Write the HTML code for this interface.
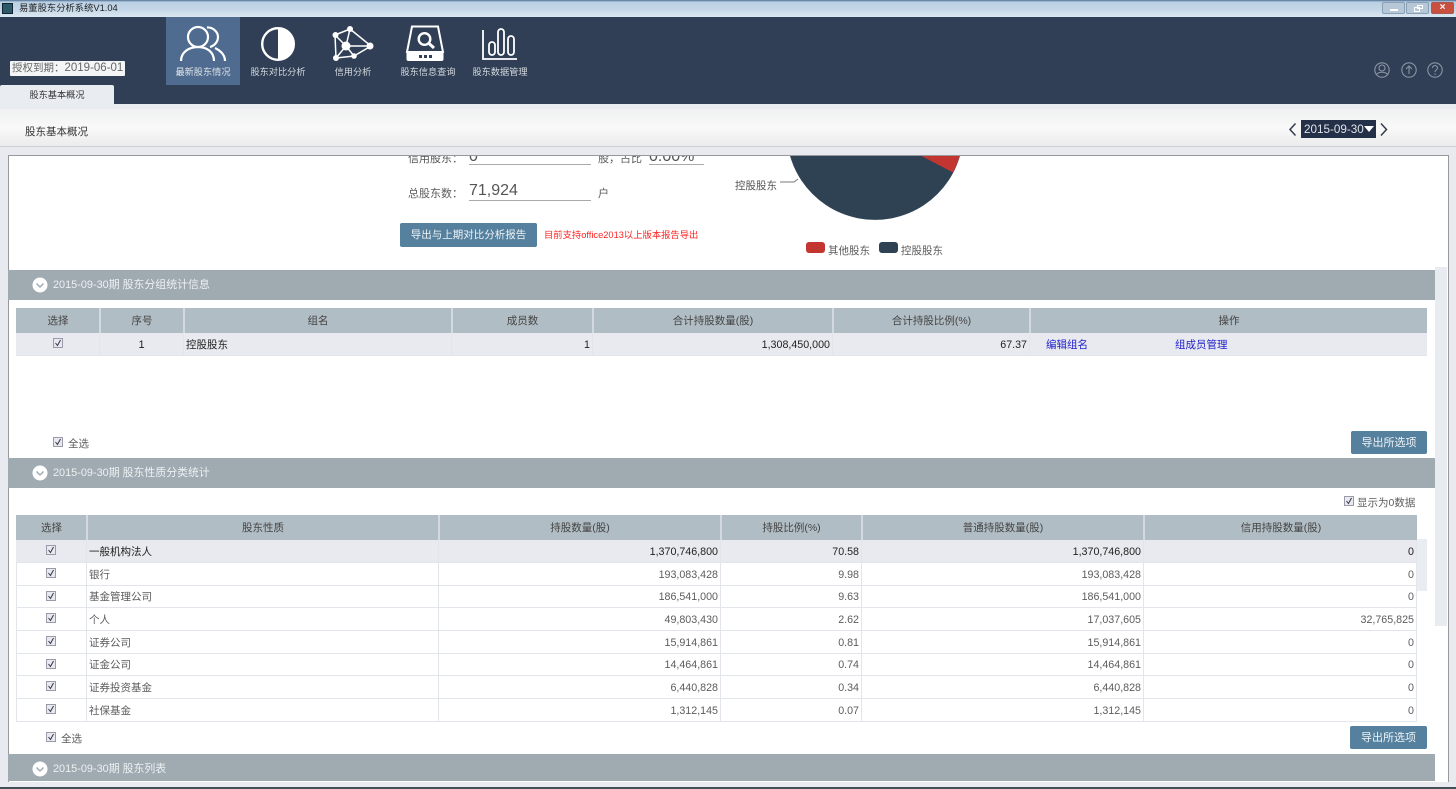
<!DOCTYPE html>
<html lang="zh"><head><meta charset="utf-8"><title>易董股东分析系统V1.04</title>
<style>
*{box-sizing:border-box}
html,body{margin:0;padding:0}
body{width:1456px;height:789px;overflow:hidden;position:relative;background:#e8eaf0;font-family:"Liberation Sans","Noto Sans CJK SC",sans-serif;font-size:10.5px;color:#5c5c5c}
.a{position:absolute;white-space:nowrap}
.c{text-align:center}
.r{text-align:right}
.cell{position:absolute;line-height:24px;white-space:nowrap;overflow:hidden;border-right:1px solid #e2e5ea;border-bottom:1px solid #e2e5ea;padding:0 2px}
.r.cell{font-size:10.7px!important}
.th{background:#b1bdc4;color:#444;text-align:center;border-left:1px solid #d3d9de;border-right:1px solid #d3d9de;border-bottom:none;line-height:26px}
.hl{background:#e9eaef;color:#222}
.sec{position:absolute;left:8px;width:1427px;height:30px;background:#9faab1;color:#eef1f3;line-height:31px;padding-left:45px;font-size:10.9px}
.sec svg{position:absolute;left:24px;top:7px}
.btn{position:absolute;background:#55809e;color:#eef3f6;text-align:center;border-radius:2px;font-size:11px}
.cb{position:absolute;width:10px;height:10px;background:#e8e9f0;border:1px solid #9a9aa8}
.cb svg{position:absolute;left:0;top:0}
.nav{position:absolute;top:66px;width:76px;text-align:center;color:#d5dae0;font-size:9.2px;line-height:12px}
</style></head><body>
<!-- title bar -->
<div class="a" style="left:0;top:0;width:1456px;height:17px;background:linear-gradient(#4f6f92 0,#b9cfe3 12%,#c6d8e8 60%,#dce8f2 100%)"></div>
<div class="a" style="left:2px;top:3px;width:11px;height:11px;background:#2c5a68;border:1px solid #123"></div>
<div class="a" style="left:19px;top:1px;font-size:9.3px;line-height:14px;color:#222">易董股东分析系统V1.04</div>
<div class="a" style="left:1382px;top:2px;width:23px;height:12px;background:#b6c8d8;border:1px solid #8aa0b4;border-radius:2px"><div style="position:absolute;left:7px;top:6px;width:8px;height:2px;background:#fff"></div></div>
<div class="a" style="left:1406px;top:2px;width:23px;height:12px;background:#b6c8d8;border:1px solid #8aa0b4;border-radius:2px"><div style="position:absolute;left:7px;top:4px;width:6px;height:5px;border:1px solid #fff"></div><div style="position:absolute;left:10px;top:2px;width:6px;height:4px;border:1px solid #fff"></div></div>
<div class="a" style="left:1431px;top:2px;width:23px;height:12px;background:#c9503f;border:1px solid #a65a50;border-radius:2px;color:#fff;font-size:10px;line-height:10px;text-align:center;font-weight:bold">×</div>
<!-- header -->
<div class="a" style="left:0;top:17px;width:1456px;height:87px;background:#303f55"></div>
<div class="a" style="left:166px;top:17px;width:74px;height:68px;background:#4f6b8f"></div>
<div class="a" style="left:10px;top:61px;width:115px;height:15px;background:#f4f5f6;border-radius:1px;color:#666;font-size:11.5px;line-height:15px;padding-left:2px"><span style="font-size:10.5px">授权到期：</span>2019-06-01</div>
<svg class="a" style="left:175px;top:22px" width="56" height="42" viewBox="0 0 56 42" fill="none" stroke="#fff" stroke-width="2.2"><circle cx="23" cy="15" r="10"/><path d="M6 39C6 30 14 25 23 25C32 25 39 30 39 39"/><path d="M32 5.500C38 5 43 10 43 15C43 20 39 24 35 25M40 26C46 29 50 33 50 39"/></svg>
<svg class="a" style="left:260px;top:26px" width="36" height="36" viewBox="0 0 36 36"><circle cx="18" cy="18" r="15.800" fill="#303f55" stroke="#fff" stroke-width="2.400"/><path d="M18 2a16 16 0 0 1 0 32z" fill="#fff"/></svg>
<svg class="a" style="left:332px;top:25px" width="42" height="38" viewBox="0 0 42 38" fill="none" stroke="#fff" stroke-width="1.500"><path d="M3 10 18 4 39 21 22 31 4 33ZM3 10 14 21 22 31M18 4 14 21 39 21M14 21 4 33"/><g fill="#fff" stroke="none"><circle cx="3.500" cy="10" r="3"/><circle cx="18" cy="4" r="3"/><circle cx="14" cy="21" r="4.500"/><circle cx="38" cy="21" r="3.500"/><circle cx="22" cy="31" r="2.800"/><circle cx="4" cy="33" r="3"/></g></svg>
<svg class="a" style="left:405px;top:25px" width="40" height="38" viewBox="0 0 40 38" fill="none" stroke="#fff" stroke-width="2"><path d="M7 1.500H33L38 27H2Z"/><rect x="1.500" y="27" width="37" height="9" rx="2" fill="#fff" stroke="none"/><circle cx="19.500" cy="14" r="5.800" stroke-width="2.400"/><path d="M24 18.500 29 23" stroke-width="3"/><g fill="#303f55" stroke="none"><rect x="14" y="30" width="3" height="3"/><rect x="19" y="30" width="3" height="3"/><rect x="24" y="30" width="3" height="3"/></g></svg>
<svg class="a" style="left:481px;top:25px" width="38" height="38" viewBox="0 0 38 38" fill="none" stroke="#fff" stroke-width="1.800"><path d="M2 5V34H36"/><rect x="8" y="17" width="6" height="13" rx="3"/><rect x="17" y="4" width="6" height="26" rx="3"/><rect x="27" y="11" width="6" height="19" rx="3"/></svg>
<div class="nav" style="left:165px;color:#e0e5ea">最新股东情况</div>
<div class="nav" style="left:240px">股东对比分析</div>
<div class="nav" style="left:315px">信用分析</div>
<div class="nav" style="left:390px">股东信息查询</div>
<div class="nav" style="left:462px">股东数据管理</div>
<svg class="a" style="left:1372px;top:60px" width="74" height="20" viewBox="0 0 74 20" fill="none" stroke="#8a96a4" stroke-width="1.100"><circle cx="10" cy="10" r="7.200"/><circle cx="10" cy="8" r="3"/><path d="M4.500 14.500c2-3 9-3 11 0"/><circle cx="37" cy="10" r="7.200"/><path d="M37 14V6.500M34 9l3-3 3 3"/><circle cx="63" cy="10" r="7.200"/><path d="M60.500 8c0-3.300 5-3.300 5 0 0 2-2.500 2-2.500 4"/><path d="M63 13.500v1.500"/></svg>
<!-- tab -->
<div class="a" style="left:0;top:85px;width:114px;height:19px;background:#e9edf2;border-radius:2px 2px 0 0;text-align:center;line-height:20px;color:#333;font-size:9.2px">股东基本概况</div>
<!-- toolbar -->
<div class="a" style="left:0;top:104px;width:1456px;height:5px;background:#e8ebf0"></div>
<div class="a" style="left:0;top:109px;width:1456px;height:38px;background:linear-gradient(#eff0f1,#f9f9f9 50%,#ececec);border-bottom:1px solid #d0d0d0"></div>
<div class="a" style="left:25px;top:125px;color:#333;font-size:10.5px;line-height:14px">股东基本概况</div>
<svg class="a" style="left:1288px;top:122px" width="10" height="15" viewBox="0 0 10 15" fill="none" stroke="#333c4c" stroke-width="1.500"><path d="M7.500 1.500 2 7.500 7.500 13.500"/></svg>
<div class="a" style="left:1301px;top:120px;width:75px;height:18px;background:#233048;color:#dfe3e8;font-size:11.7px;line-height:19px;padding-left:3px">2015-09-30</div>
<div class="a" style="left:1364px;top:126px;width:0;height:0;border:5.500px solid transparent;border-top:6px solid #fff;border-bottom:0"></div>
<svg class="a" style="left:1379px;top:122px" width="10" height="15" viewBox="0 0 10 15" fill="none" stroke="#333c4c" stroke-width="1.500"><path d="M2 1.500 7.500 7.500 2 13.500"/></svg>
<!-- content panel -->
<div class="a" style="left:8px;top:155px;width:1441px;height:627px;background:#fff;border:1px solid #999;border-bottom:none"></div>
<div class="a" style="left:1435px;top:267px;width:12px;height:359px;background:#e8ebf0"></div>
<div class="a" style="left:0;top:787px;width:1456px;height:2px;background:#444d58"></div>
<div class="a" style="left:408px;top:156px;height:8px;overflow:hidden;color:#555;font-size:11px;line-height:6px;width:60px">信用股东：</div>
<div class="a" style="left:469px;top:156px;height:9px;overflow:hidden;width:122px;border-bottom:1px solid #aaa;font-size:16px;line-height:2px;color:#555">0</div>
<div class="a" style="left:598px;top:156px;height:8px;overflow:hidden;font-size:11px;line-height:6px;width:50px">股，占比</div>
<div class="a" style="left:649px;top:156px;height:9px;overflow:hidden;width:55px;border-bottom:1px solid #aaa;font-size:16px;line-height:2px;color:#555">0.00%</div>
<div class="a" style="left:408px;top:187px;font-size:11px;line-height:14px">总股东数：</div>
<div class="a" style="left:469px;top:181px;width:122px;height:20px;border-bottom:1px solid #aaa;font-size:16px;line-height:19px;color:#555">71,924</div>
<div class="a" style="left:598px;top:187px;font-size:11px;line-height:14px">户</div>
<div class="btn" style="left:400px;top:223px;width:137px;height:24px;line-height:25px;font-size:10.5px">导出与上期对比分析报告</div>
<div class="a" style="left:544px;top:228px;color:#f22;font-size:9.3px;line-height:14px">目前支持office2013以上版本报告导出</div>
<svg class="a" style="left:780px;top:156px" width="190" height="66" viewBox="780 156 190 66"><circle cx="875" cy="131.500" r="88.400" fill="#2f4254"/><path d="M875 131.500 953 172.500A88.400 88.400 0 0 0 960 110L875 110Z" fill="#c23531"/><path d="M780 182h14l4-3" fill="none" stroke="#777" stroke-width="1"/></svg>
<div class="a" style="left:735px;top:179px;font-size:10.5px;line-height:14px;color:#555">控股股东</div>
<div class="a" style="left:806px;top:242px;width:19px;height:11px;background:#c23531;border-radius:3px"></div>
<div class="a" style="left:828px;top:244px;font-size:10.5px;line-height:14px">其他股东</div>
<div class="a" style="left:879px;top:242px;width:19px;height:11px;background:#2f4254;border-radius:3px"></div>
<div class="a" style="left:901px;top:244px;font-size:10.5px;line-height:14px">控股股东</div>
<!-- section 1 -->
<div class="sec" style="top:270px"><svg width="16" height="16" viewBox="0 0 16 16"><circle cx="8" cy="8" r="7.500" fill="#fff"/><path d="M4.500 6.500 8 10 11.500 6.500" fill="none" stroke="#9faab1" stroke-width="1.500"/></svg>2015-09-30期 股东分组统计信息</div>
<div class="cell th" style="left:16px;top:308px;width:84px;height:25px;border-left-color:#b1bdc4">选择</div><div class="cell th" style="left:100px;top:308px;width:84px;height:25px">序号</div><div class="cell th" style="left:184px;top:308px;width:268px;height:25px">组名</div><div class="cell th" style="left:452px;top:308px;width:141px;height:25px">成员数</div><div class="cell th" style="left:593px;top:308px;width:240px;height:25px">合计持股数量(股)</div><div class="cell th" style="left:833px;top:308px;width:197px;height:25px">合计持股比例(%)</div><div class="cell th" style="left:1030px;top:308px;width:397px;height:25px;border-right:none">操作</div>
<div class="cell hl" style="left:16px;top:333px;width:84px;height:23px"></div><div class="cell hl c" style="left:100px;top:333px;width:84px;height:23px;font-size:11px">1</div><div class="cell hl" style="left:184px;top:333px;width:268px;height:23px">控股股东</div><div class="cell hl r" style="left:452px;top:333px;width:141px;height:23px;font-size:11px">1</div><div class="cell hl r" style="left:593px;top:333px;width:240px;height:23px;font-size:11px">1,308,450,000</div><div class="cell hl r" style="left:833px;top:333px;width:197px;height:23px;font-size:11px">67.37</div><div class="cell hl" style="left:1030px;top:333px;width:397px;height:23px;border-right:none"></div>
<div class="a" style="left:1046px;top:338px;color:#2222cc;line-height:14px">编辑组名</div>
<div class="a" style="left:1175px;top:338px;color:#2222cc;line-height:14px">组成员管理</div>
<div class="cb" style="left:53px;top:338px"><svg width="8" height="8" viewBox="0 0 8 8"><path d="M1.500 4 3.500 6.500 6.500 1" fill="none" stroke="#334" stroke-width="1"/></svg></div>
<div class="cb" style="left:53px;top:437px"><svg width="8" height="8" viewBox="0 0 8 8"><path d="M1.500 4 3.500 6.500 6.500 1" fill="none" stroke="#334" stroke-width="1"/></svg></div>
<div class="a" style="left:68px;top:437px;line-height:14px">全选</div>
<div class="btn" style="left:1351px;top:431px;width:76px;height:23px;line-height:24px">导出所选项</div>
<!-- section 2 -->
<div class="sec" style="top:458px"><svg width="16" height="16" viewBox="0 0 16 16"><circle cx="8" cy="8" r="7.500" fill="#fff"/><path d="M4.500 6.500 8 10 11.500 6.500" fill="none" stroke="#9faab1" stroke-width="1.500"/></svg>2015-09-30期 股东性质分类统计</div>
<div class="cb" style="left:1344px;top:496px"><svg width="8" height="8" viewBox="0 0 8 8"><path d="M1.500 4 3.500 6.500 6.500 1" fill="none" stroke="#334" stroke-width="1"/></svg></div>
<div class="a" style="left:1357px;top:496px;line-height:14px">显示为0数据</div>
<div class="cell th" style="left:16px;top:515px;width:71px;height:25px;border-left-color:#b1bdc4">选择</div><div class="cell th" style="left:87px;top:515px;width:352px;height:25px">股东性质</div><div class="cell th" style="left:439px;top:515px;width:282px;height:25px">持股数量(股)</div><div class="cell th" style="left:721px;top:515px;width:141px;height:25px">持股比例(%)</div><div class="cell th" style="left:862px;top:515px;width:282px;height:25px">普通持股数量(股)</div><div class="cell th" style="left:1144px;top:515px;width:273px;height:25px;border-right:none">信用持股数量(股)</div>
<div class="a" style="left:1417px;top:539px;width:10px;height:52px;background:#e9ecf1"></div>
<!-- rows -->
<div class="cell hl" style="left:16px;top:540px;width:71px;height:23px"></div><div class="cell hl" style="left:87px;top:540px;width:352px;height:23px">一般机构法人</div><div class="cell hl r" style="left:439px;top:540px;width:282px;height:23px">1,370,746,800</div><div class="cell hl r" style="left:721px;top:540px;width:141px;height:23px">70.58</div><div class="cell hl r" style="left:862px;top:540px;width:282px;height:23px">1,370,746,800</div><div class="cell hl r" style="left:1144px;top:540px;width:273px;height:23px">0</div>
<div class="cell" style="left:16px;top:563px;width:71px;height:23px"></div><div class="cell" style="left:87px;top:563px;width:352px;height:23px">银行</div><div class="cell r" style="left:439px;top:563px;width:282px;height:23px">193,083,428</div><div class="cell r" style="left:721px;top:563px;width:141px;height:23px">9.98</div><div class="cell r" style="left:862px;top:563px;width:282px;height:23px">193,083,428</div><div class="cell r" style="left:1144px;top:563px;width:273px;height:23px">0</div>
<div class="cell" style="left:16px;top:585px;width:71px;height:23px"></div><div class="cell" style="left:87px;top:585px;width:352px;height:23px">基金管理公司</div><div class="cell r" style="left:439px;top:585px;width:282px;height:23px">186,541,000</div><div class="cell r" style="left:721px;top:585px;width:141px;height:23px">9.63</div><div class="cell r" style="left:862px;top:585px;width:282px;height:23px">186,541,000</div><div class="cell r" style="left:1144px;top:585px;width:273px;height:23px">0</div>
<div class="cell" style="left:16px;top:608px;width:71px;height:23px"></div><div class="cell" style="left:87px;top:608px;width:352px;height:23px">个人</div><div class="cell r" style="left:439px;top:608px;width:282px;height:23px">49,803,430</div><div class="cell r" style="left:721px;top:608px;width:141px;height:23px">2.62</div><div class="cell r" style="left:862px;top:608px;width:282px;height:23px">17,037,605</div><div class="cell r" style="left:1144px;top:608px;width:273px;height:23px">32,765,825</div>
<div class="cell" style="left:16px;top:631px;width:71px;height:23px"></div><div class="cell" style="left:87px;top:631px;width:352px;height:23px">证券公司</div><div class="cell r" style="left:439px;top:631px;width:282px;height:23px">15,914,861</div><div class="cell r" style="left:721px;top:631px;width:141px;height:23px">0.81</div><div class="cell r" style="left:862px;top:631px;width:282px;height:23px">15,914,861</div><div class="cell r" style="left:1144px;top:631px;width:273px;height:23px">0</div>
<div class="cell" style="left:16px;top:653px;width:71px;height:23px"></div><div class="cell" style="left:87px;top:653px;width:352px;height:23px">证金公司</div><div class="cell r" style="left:439px;top:653px;width:282px;height:23px">14,464,861</div><div class="cell r" style="left:721px;top:653px;width:141px;height:23px">0.74</div><div class="cell r" style="left:862px;top:653px;width:282px;height:23px">14,464,861</div><div class="cell r" style="left:1144px;top:653px;width:273px;height:23px">0</div>
<div class="cell" style="left:16px;top:676px;width:71px;height:23px"></div><div class="cell" style="left:87px;top:676px;width:352px;height:23px">证券投资基金</div><div class="cell r" style="left:439px;top:676px;width:282px;height:23px">6,440,828</div><div class="cell r" style="left:721px;top:676px;width:141px;height:23px">0.34</div><div class="cell r" style="left:862px;top:676px;width:282px;height:23px">6,440,828</div><div class="cell r" style="left:1144px;top:676px;width:273px;height:23px">0</div>
<div class="cell" style="left:16px;top:699px;width:71px;height:23px"></div><div class="cell" style="left:87px;top:699px;width:352px;height:23px">社保基金</div><div class="cell r" style="left:439px;top:699px;width:282px;height:23px">1,312,145</div><div class="cell r" style="left:721px;top:699px;width:141px;height:23px">0.07</div><div class="cell r" style="left:862px;top:699px;width:282px;height:23px">1,312,145</div><div class="cell r" style="left:1144px;top:699px;width:273px;height:23px">0</div>
<div class="a" style="left:16px;top:563px;width:1px;height:159px;background:#e2e5ea"></div>
<div class="cb" style="left:46px;top:545px"><svg width="8" height="8" viewBox="0 0 8 8"><path d="M1.500 4 3.500 6.500 6.500 1" fill="none" stroke="#334" stroke-width="1"/></svg></div>
<div class="cb" style="left:46px;top:568px"><svg width="8" height="8" viewBox="0 0 8 8"><path d="M1.500 4 3.500 6.500 6.500 1" fill="none" stroke="#334" stroke-width="1"/></svg></div>
<div class="cb" style="left:46px;top:591px"><svg width="8" height="8" viewBox="0 0 8 8"><path d="M1.500 4 3.500 6.500 6.500 1" fill="none" stroke="#334" stroke-width="1"/></svg></div>
<div class="cb" style="left:46px;top:613px"><svg width="8" height="8" viewBox="0 0 8 8"><path d="M1.500 4 3.500 6.500 6.500 1" fill="none" stroke="#334" stroke-width="1"/></svg></div>
<div class="cb" style="left:46px;top:636px"><svg width="8" height="8" viewBox="0 0 8 8"><path d="M1.500 4 3.500 6.500 6.500 1" fill="none" stroke="#334" stroke-width="1"/></svg></div>
<div class="cb" style="left:46px;top:659px"><svg width="8" height="8" viewBox="0 0 8 8"><path d="M1.500 4 3.500 6.500 6.500 1" fill="none" stroke="#334" stroke-width="1"/></svg></div>
<div class="cb" style="left:46px;top:681px"><svg width="8" height="8" viewBox="0 0 8 8"><path d="M1.500 4 3.500 6.500 6.500 1" fill="none" stroke="#334" stroke-width="1"/></svg></div>
<div class="cb" style="left:46px;top:704px"><svg width="8" height="8" viewBox="0 0 8 8"><path d="M1.500 4 3.500 6.500 6.500 1" fill="none" stroke="#334" stroke-width="1"/></svg></div>
<div class="cb" style="left:46px;top:732px"><svg width="8" height="8" viewBox="0 0 8 8"><path d="M1.500 4 3.500 6.500 6.500 1" fill="none" stroke="#334" stroke-width="1"/></svg></div>
<div class="a" style="left:61px;top:732px;line-height:14px">全选</div>
<div class="btn" style="left:1350px;top:726px;width:77px;height:23px;line-height:24px">导出所选项</div>
<!-- section 3 -->
<div class="sec" style="top:754px;height:27px;line-height:30px"><svg width="16" height="16" viewBox="0 0 16 16"><circle cx="8" cy="8" r="7.500" fill="#fff"/><path d="M4.500 6.500 8 10 11.500 6.500" fill="none" stroke="#9faab1" stroke-width="1.500"/></svg>2015-09-30期 股东列表</div>
</body></html>
